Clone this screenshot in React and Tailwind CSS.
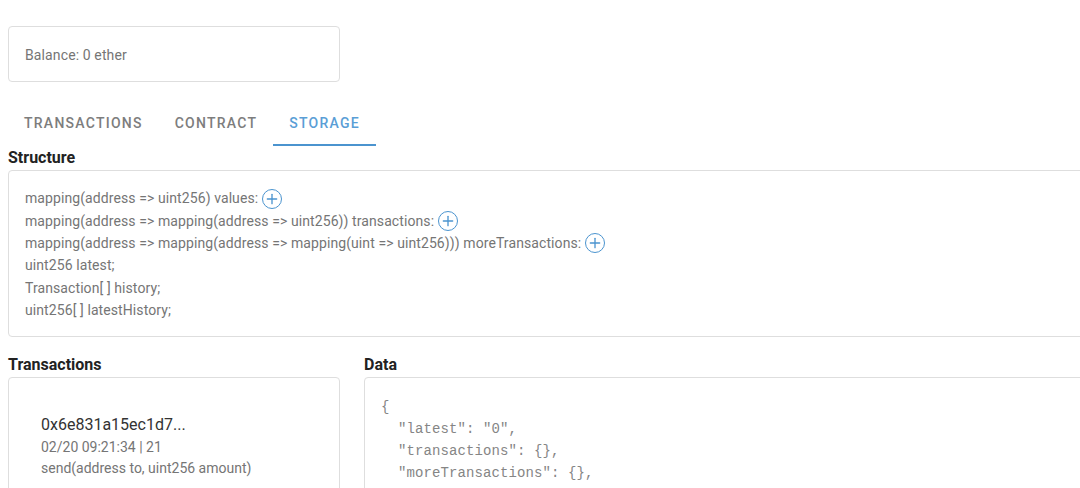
import React from 'react'
import { Plus } from 'lucide-react'

const tabs = ['Transactions', 'Contract', 'Storage']

const structure = [
  { text: 'mapping(address => uint256) values:', expand: true },
  { text: 'mapping(address => mapping(address => uint256)) transactions:', expand: true },
  { text: 'mapping(address => mapping(address => mapping(uint => uint256))) moreTransactions:', expand: true },
  { text: 'uint256 latest;' },
  { text: 'Transaction[ ] history;' },
  { text: 'uint256[ ] latestHistory;' },
]

const dataLines = ['{', '  "latest": "0",', '  "transactions": {},', '  "moreTransactions": {},']

function ExpandButton() {
  return (
    <span className="mt-px ml-1 inline-flex h-5 w-5 items-center justify-center rounded-full border border-[#4b94cf] text-[#4b94cf]">
      <Plus size={16} strokeWidth={2} />
    </span>
  )
}

export default function App() {
  return (
    <div className="h-[488px] w-[1080px] overflow-hidden bg-white pl-2 font-['Roboto',sans-serif] text-sm text-[#757575]">
      {/* Balance */}
      <div className="mt-[26px] flex h-14 w-[332px] items-center rounded border border-[#dedede] px-4 pt-px tracking-[0.12px]">
        Balance: 0 ether
      </div>

      {/* Tabs */}
      <div className="mt-4 flex h-12 items-stretch">
        {tabs.map((t, i) => (
          <div
            key={t}
            className={
              i === 2
                ? 'flex items-center border-b-2 border-[#4b94cf] px-4 pt-1 text-sm font-medium tracking-[1.25px] text-[#5a9ed6] uppercase'
                : 'flex items-center border-b-2 border-transparent px-4 pt-1 text-sm font-medium tracking-[1.25px] text-[#7d7d7d] uppercase'
            }
          >
            {t}
          </div>
        ))}
      </div>

      <h2 className="text-base leading-6 font-bold text-[#222222]">Structure</h2>
      <div className="w-[1200px] rounded border border-[#dedede] px-4 pt-4 pb-[15px] tracking-[0.09px]">
        {structure.map((row) => (
          <div key={row.text} className="flex h-[22.4px] items-center leading-[22px]">
            {row.text}
            {row.expand && <ExpandButton />}
          </div>
        ))}
      </div>

      <div className="mt-4 flex gap-6">
        <div className="w-[332px] shrink-0">
          <h2 className="text-base leading-6 font-bold text-[#222222]">Transactions</h2>
          <div className="h-40 rounded border border-[#dedede] px-8 pt-[37px]">
            <div className="text-base leading-5 text-[#333333]">0x6e831a15ec1d7...</div>
            <div className="mt-px leading-[22px]">02/20 09:21:34 | 21</div>
            <div className="leading-[21px]">send(address to, uint256 amount)</div>
          </div>
        </div>
        <div className="w-[800px] shrink-0">
          <h2 className="text-base leading-6 font-bold text-[#222222]">Data</h2>
          <pre className="h-40 rounded border border-[#dedede] px-4 pt-[18px] font-['Liberation_Mono',monospace] text-sm leading-[22px] tracking-[0.1px] text-[#858585]">
            {dataLines.join('\n')}
          </pre>
        </div>
      </div>
    </div>
  )
}
